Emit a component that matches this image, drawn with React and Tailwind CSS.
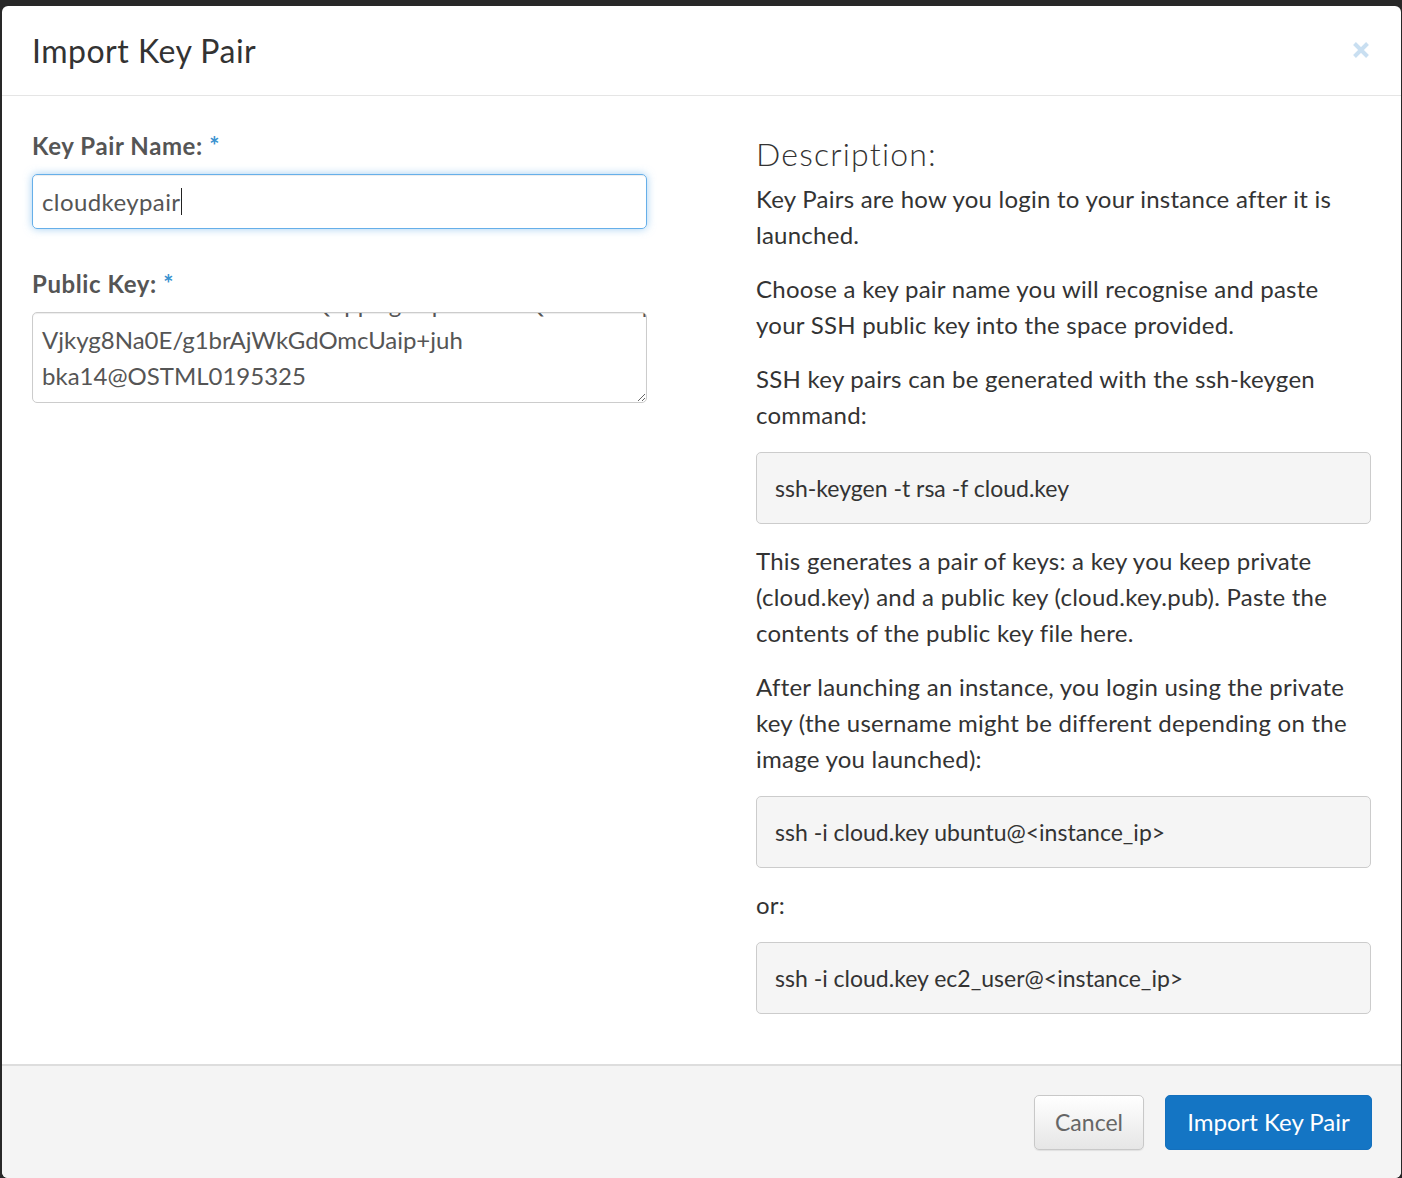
import { useEffect, useRef } from "react";

const font = { fontFamily: "Lato, 'Open Sans', 'Liberation Sans', sans-serif" };

const publicKey =
  "AAAAB3NzaC1ET2EAAAQ1ppDgZAp8RKLMQW3EXNTp4U\nVjkyg8Na0E/g1brAjWkGdOmcUaip+juh\nbka14@OSTML0195325";

function CodeBox({ children }) {
  return (
    <pre
      className="mb-[19px] rounded-[5px] border border-[#cccccc] bg-[#f5f5f5] px-[18px] py-[17px] text-[23px] leading-[36px] tracking-normal text-[#333]"
      style={font}
    >
      {children}
    </pre>
  );
}

export default function App() {
  const taRef = useRef(null);

  useEffect(() => {
    if (taRef.current) taRef.current.scrollTop = taRef.current.scrollHeight;
  }, []);

  return (
    <div className="min-h-screen bg-[#282828] pt-[6px]" style={font}>
      <div className="ml-[2px] flex h-[1172px] w-[1399px] flex-col overflow-hidden rounded-[6px] bg-white">
        {/* Header */}
        <div className="flex h-[90px] shrink-0 items-center justify-between border-b border-[#e5e5e5] pl-[30px] pr-[31px]">
          <h4 className="text-[32px] font-normal tracking-[0.5px] text-[#333]">Import Key Pair</h4>
          <svg width="18" height="18" viewBox="0 0 18 18" className="mt-[-2px]">
            <path d="M2.5 2.5 L15.5 15.5 M15.5 2.5 L2.5 15.5" stroke="#c9dff1" strokeWidth="4" strokeLinecap="butt" />
          </svg>
        </div>

        {/* Body */}
        <div className="flex-1 px-[30px] pt-[32px]">
          <div className="grid grid-cols-2 gap-x-[109px]">
            <div>
              <label className="mb-[10px] block text-[24px] font-bold leading-[36px] tracking-[0.6px] text-[#555]">
                Key Pair Name: <span className="text-[#3a92d0]">*</span>
              </label>
              <div className="flex h-[55px] items-center rounded-[5px] border border-[#66afe9] px-[9px] text-[24px] tracking-[0.4px] text-[#555] shadow-[inset_0_1px_1px_rgba(0,0,0,0.075),0_0_8px_rgba(102,175,233,0.6)]">
                <span>cloudkeypair</span>
                <span className="ml-px inline-block h-[27px] w-px bg-[#222]" />
              </div>

              <label className="mb-[10px] mt-[37px] block text-[24px] font-bold leading-[36px] tracking-[0.6px] text-[#555]">
                Public Key: <span className="text-[#3a92d0]">*</span>
              </label>
              <textarea
                ref={taRef}
                readOnly
                value={publicKey}
                className="block h-[91px] w-full resize-y overflow-hidden rounded-[5px] border border-[#cccccc] px-[9px] pb-[8px] pt-[8px] text-[24px] leading-[36px] text-[#555] outline-none shadow-[inset_0_1px_1px_rgba(0,0,0,0.075)]"
                style={{ ...font, whiteSpace: "pre" }}
              />
            </div>

            <div className="text-[24px] leading-[36px] tracking-[0.25px] text-[#333]">
              <h3 className="mb-[9px] mt-[8px] text-[32px] font-light leading-[36px] tracking-[1.2px] text-[#333]">
                Description:
              </h3>
              <p className="mb-[18px]">Key Pairs are how you login to your instance after it is launched.</p>
              <p className="mb-[18px]">
                Choose a key pair name you will recognise and paste your SSH public key into the space provided.
              </p>
              <p className="mb-[19px]">SSH key pairs can be generated with the ssh-keygen command:</p>
              <CodeBox>ssh-keygen -t rsa -f cloud.key</CodeBox>
              <p className="mb-[18px]">
                This generates a pair of keys: a key you keep private (cloud.key) and a public key (cloud.key.pub).
                Paste the contents of the public key file here.
              </p>
              <p className="mb-[19px]">
                After launching an instance, you login using the private key (the username might be different
                depending on the image you launched):
              </p>
              <CodeBox>{"ssh -i cloud.key ubuntu@<instance_ip>"}</CodeBox>
              <p className="mb-[19px]">or:</p>
              <CodeBox>{"ssh -i cloud.key ec2_user@<instance_ip>"}</CodeBox>
            </div>
          </div>
        </div>

        {/* Footer */}
        <div className="flex h-[114px] shrink-0 items-center justify-end gap-[21px] border-t-2 border-[#dddddd] bg-[#f4f4f4] px-[29px]">
          <button className="h-[55px] w-[110px] rounded-[5px] border border-[#c8c8c8] bg-gradient-to-b from-white to-[#e6e6e6] text-[23px] text-[#666] shadow-[0_1px_1px_rgba(0,0,0,0.08)]">
            Cancel
          </button>
          <button className="h-[55px] w-[207px] rounded-[5px] border border-[#1470bd] bg-[#1475c4] text-[24px] text-white">
            Import Key Pair
          </button>
        </div>
      </div>
    </div>
  );
}
